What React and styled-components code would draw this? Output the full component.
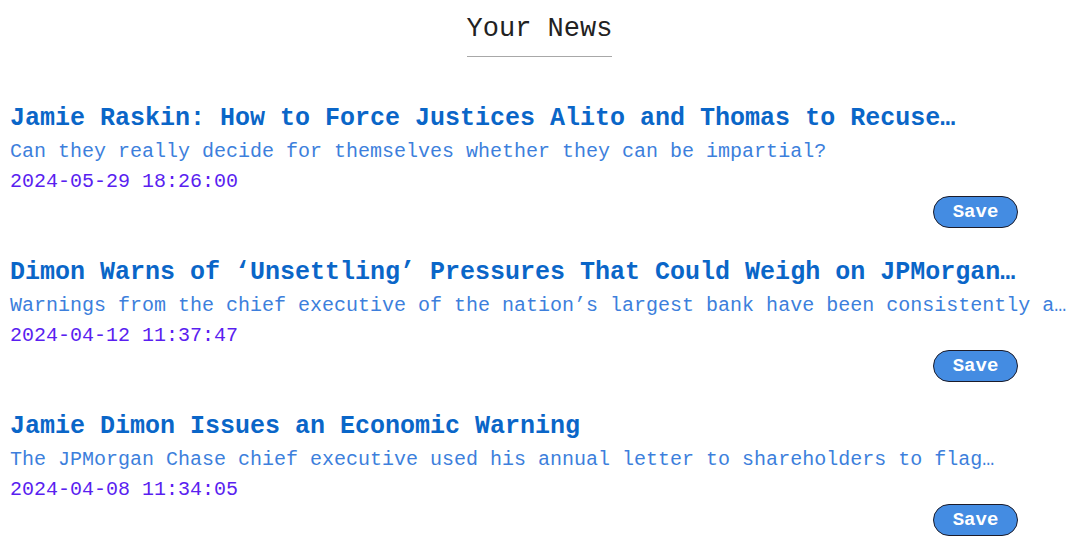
import React from "react";
import styled, { createGlobalStyle } from "styled-components";

const news = [
  {
    title: "Jamie Raskin: How to Force Justices Alito and Thomas to Recuse…",
    abstract: "Can they really decide for themselves whether they can be impartial?",
    date: "2024-05-29 18:26:00",
  },
  {
    title: "Dimon Warns of ‘Unsettling’ Pressures That Could Weigh on JPMorgan…",
    abstract:
      "Warnings from the chief executive of the nation’s largest bank have been consistently a…",
    date: "2024-04-12 11:37:47",
  },
  {
    title: "Jamie Dimon Issues an Economic Warning",
    abstract: "The JPMorgan Chase chief executive used his annual letter to shareholders to flag…",
    date: "2024-04-08 11:34:05",
  },
];

const App = () => {
  return (
    <>
      <Global />
      <Page>
        <Header>
          <Heading>Your News</Heading>
        </Header>
        <List>
          {news.map((item) => (
            <Item key={item.date}>
              <Headline>{item.title}</Headline>
              <Abstract>{item.abstract}</Abstract>
              <Stamp>{item.date}</Stamp>
              <Actions>
                <SaveButton>Save</SaveButton>
              </Actions>
            </Item>
          ))}
        </List>
      </Page>
    </>
  );
};

export default App;

const Global = createGlobalStyle`
  body {
    margin: 0;
    background: #fff;
    font-family: "Liberation Mono", "Courier New", monospace;
  }
`;

const Page = styled.main`
  padding: 0 0 0 10px;
`;

const Header = styled.header`
  display: flex;
  justify-content: center;
  padding: 13px 18px 0 0;
`;

const Heading = styled.h1`
  margin: 0;
  padding-bottom: 11px;
  font-size: 27px;
  font-weight: normal;
  line-height: 32px;
  color: #222;
  border-bottom: 1.5px solid #a8a8a8;
`;

const List = styled.section`
  display: flex;
  flex-direction: column;
  gap: 28px;
  margin-top: 45px;
`;

const Item = styled.article`
  display: flex;
  flex-direction: column;
`;

const Headline = styled.h2`
  margin: 0;
  font-size: 25px;
  line-height: 34px;
  font-weight: bold;
  color: #0a66c8;
  white-space: nowrap;
`;

const Abstract = styled.p`
  margin: 0;
  font-size: 20px;
  line-height: 32px;
  color: #3d7fdc;
  white-space: nowrap;
`;

const Stamp = styled.p`
  margin: 0;
  font-size: 20px;
  line-height: 28px;
  color: #5a1ff0;
`;

const Actions = styled.div`
  display: flex;
  justify-content: flex-end;
  padding-right: 69px;
`;

const SaveButton = styled.button`
  width: 85px;
  height: 32px;
  border: 1px solid #1c1c2a;
  border-radius: 16px;
  background: #448ce2;
  color: #fff;
  font-family: "Liberation Mono", "Courier New", monospace;
  font-weight: bold;
  font-size: 19px;
  cursor: pointer;
`;
